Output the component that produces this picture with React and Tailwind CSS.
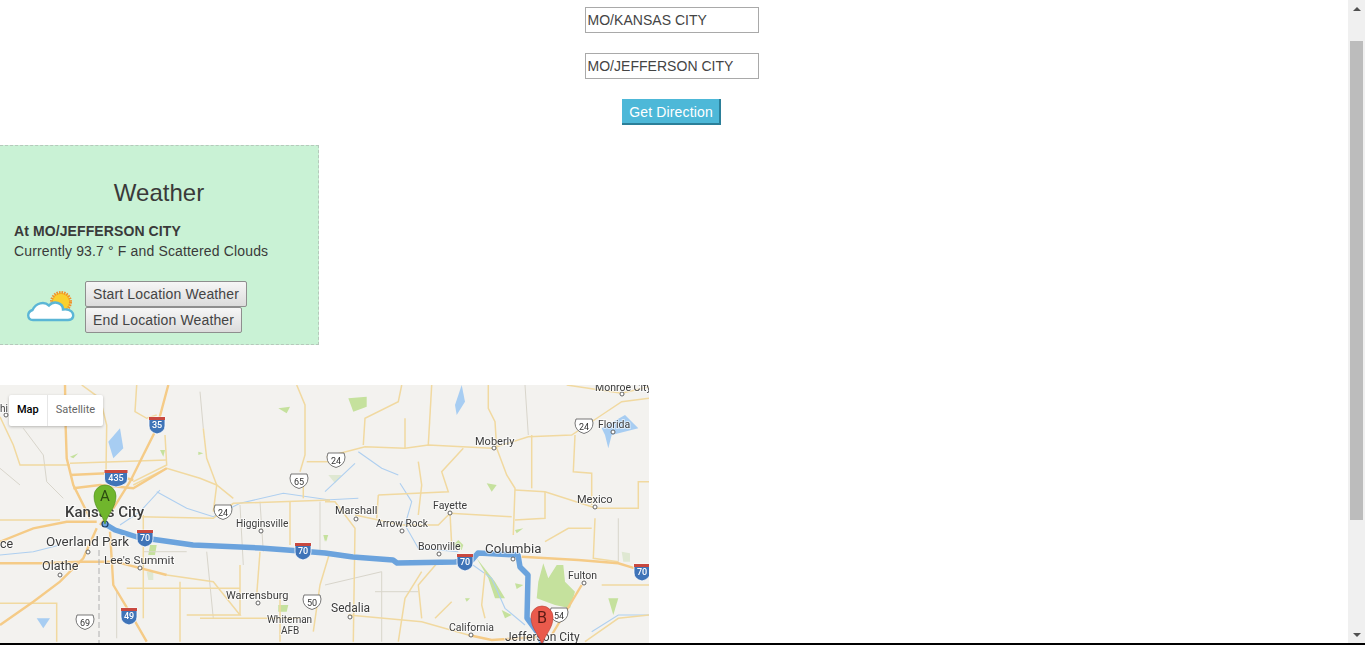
// road data is traced from two map halves; z2 is shifted by the second half's x offset
const scale = (s, dx = 0) =>
  s
    .split(" ")
    .map((p) => {
      const [x, y] = p.split(",").map(Number);
      return `${(x / 3 + dx).toFixed(1)},${(y / 3).toFixed(1)}`;
    })
    .join(" ");
const z1 = (list) => list.map((s) => scale(s));
const z2 = (list) => list.map((s) => scale(s, 325));

const majorRoads = [
  ...z1([
    "505,0 470,130 430,210 390,290 340,370 300,420",
    "195,0 197,130 200,220 220,300 270,400",
    "0,470 100,430 200,410 290,410",
    "0,535 130,535 240,530 340,530",
    "0,720 100,650 180,590 250,520 290,430",
    "330,440 340,600 400,700 440,770",
    "220,310 300,300 400,310 500,250",
    "210,270 320,265 400,285",
    "345,530 500,570",
  ]),
  ...z2([
    "590,515 760,525 880,535 930,550 972,550",
    "430,750 500,765 650,755",
    "770,600 680,750",
  ]),
];

const minorRoads = [
  ...z1([
    "245,0 300,40 320,120 318,260",
    "410,0 405,80 440,100 470,90",
    "495,150 500,240 400,290",
    "610,130 620,220 650,300 640,380",
    "890,0 915,60 915,210 900,260",
    "0,95 40,180 60,240 210,240",
    "210,235 500,225",
    "400,300 500,250 600,280 650,300 700,340",
    "420,395 640,400 700,355 990,345",
    "430,390 430,700",
    "0,405 180,405",
    "500,570 640,590 720,690 560,690",
    "720,690 720,540",
    "780,500 770,630",
    "870,350 870,480",
    "910,300 910,340",
    "990,230 920,230",
    "990,500 960,600 940,740",
    "540,590 540,770",
    "0,655 170,655 170,770",
    "380,610 720,610",
    "600,700 900,700",
    "840,640 840,770",
  ]),
  ...z2([
    "0,350 30,350 90,430 85,770",
    "5,215 120,185 240,190 310,180 500,190 610,155 740,150 830,90 890,50 972,40",
    "725,0 890,25 972,5",
    "115,180 120,100 220,50 230,0",
    "240,190 240,100",
    "310,180 320,0",
    "490,0 490,70 510,110 515,190 545,270 570,310 565,450",
    "415,190 350,260 370,320 160,330",
    "280,230 290,300 280,390",
    "160,330 155,400",
    "90,390 230,420 340,420 375,385 560,395",
    "375,385 380,480",
    "570,315 660,320 800,365 810,370 940,370 940,290 972,290",
    "810,400 805,520 880,530",
    "620,150 620,310",
    "750,150 745,260 800,265 800,360",
    "570,405 660,400 660,320",
    "660,470 730,430 800,430",
    "340,530 280,600 290,700",
    "290,560 240,640 220,770",
    "70,690 290,710 430,750",
    "480,560 470,660 480,700",
    "380,650 330,700",
    "780,770 880,700 972,690",
    "830,600 972,600",
  ]),
];

const thinRoads = [
  ...z1([
    "70,130 130,210 140,290 190,340",
    "600,20 610,130",
    "720,360 730,540",
    "780,350 790,500",
    "620,500 640,700",
    "960,350 960,500",
    "350,620 350,760",
    "430,500 560,500",
    "0,250 60,300",
  ]),
  ...z2([
    "170,560 170,770",
    "600,0 610,150",
    "0,600 170,560",
    "880,400 880,530",
    "150,620 280,620",
  ]),
];

const rivers = [
  ...z1([
    "480,315 420,380 360,420",
    "470,320 560,370 640,395 720,355 850,325 990,345",
    "0,510 100,500 180,480",
  ]),
  ...z2([
    "0,345 100,340",
    "100,200 170,250 220,270",
    "0,320 90,235",
    "225,295 260,350 240,420 280,490 400,500",
    "430,530 500,580 540,670 600,720",
    "972,690 880,690 800,740",
  ]),
];

const greens = [
  ...z2([
    "70,40 125,35 125,65 85,80",
    "485,295 515,300 500,320",
    "640,590 655,535 670,580 695,540 715,540 720,590 750,620 735,670 690,660 635,640",
    "570,435 595,430 575,445",
    "570,595 595,600 575,612",
    "850,640 880,640 865,690",
    "400,465 415,480 410,495 385,480",
    "455,520 510,590 540,640 510,640 490,580",
    "530,675 560,690 540,700",
    "420,640 435,640 425,650",
    "0,450 8,450 5,470",
  ]),
  ...z1([
    "835,70 870,65 860,85",
    "210,215 235,205 220,220",
    "480,195 495,195 490,215",
    "595,200 610,205 595,210",
    "835,660 865,660 860,680 835,680",
    "970,450 985,450 975,470",
    "450,480 470,480 465,510 445,510",
  ]),
];

const paleGreens = [
  ...z2(["10,270 50,270 30,295", "890,500 915,505 915,530 895,530"]),
  ...z1(["440,560 460,560 460,585 445,585"]),
];

const lakes = [
  ...z1(["325,170 360,130 370,190 340,220", "110,700 150,700 130,730"]),
  ...z2(["410,0 420,50 395,90 390,60", "830,130 900,90 940,130 860,150 850,190 840,150"]),
];

const interstates = [
  { n: "35", x: 157, y: 40, w: 16 },
  { n: "435", x: 116, y: 93, w: 23 },
  { n: "70", x: 145, y: 153, w: 16 },
  { n: "70", x: 303, y: 166, w: 16 },
  { n: "70", x: 465, y: 177, w: 16 },
  { n: "70", x: 642, y: 187, w: 16 },
  { n: "49", x: 129, y: 231, w: 16 },
];

const highways = [
  { n: "65", x: 299, y: 96 },
  { n: "24", x: 223, y: 127 },
  { n: "24", x: 336, y: 75 },
  { n: "24", x: 584, y: 41 },
  { n: "69", x: 85, y: 237 },
  { n: "50", x: 312, y: 217 },
  { n: "54", x: 559, y: 230 },
];

// label, x, baseline y, size, weight
const places = [
  ["Monroe City", 595, 6, 10.5],
  ["Florida", 598, 43, 10.5],
  ["Moberly", 475, 60, 11],
  ["Mexico", 577, 118, 11],
  ["Fayette", 433, 124, 10.5],
  ["Marshall", 335, 129, 11],
  ["Arrow Rock", 376, 142, 10.2],
  ["Higginsville", 236, 142, 10.2],
  ["Boonville", 418, 165, 10.5],
  ["Columbia", 485, 168, 13.3],
  ["Kansas City", 65, 132, 15, 500],
  ["ce", 0, 163, 12.5],
  ["Overland Park", 46, 161, 13.4],
  ["Lee's Summit", 104, 179, 11.8],
  ["Olathe", 42, 185, 12.6],
  ["Fulton", 568, 194, 10.5],
  ["Warrensburg", 226, 214, 11],
  ["Sedalia", 331, 227, 12],
  ["California", 449, 246, 10.5],
  ["Whiteman", 267, 238, 10],
  ["AFB", 281, 249, 10],
  ["Jefferson City", 505, 256, 12],
  ["hi", 0, 27, 10],
];

const dots = [
  [622, 9], [613, 47], [494, 63], [595, 122], [450, 128], [356, 134], [402, 146], [261, 146],
  [439, 169], [513, 174], [88, 167], [140, 183], [60, 190], [584, 198], [258, 218], [350, 232],
  [471, 250], [6, 30],
];

function MapArt() {
  return (
    <svg
      width="649"
      height="258"
      viewBox="0 0 649 258"
      className="block blur-[0.3px]"
      style={{ fontFamily: "Roboto, sans-serif" }}
    >
      <rect width="649" height="258" fill="#f3f2ef" />
      {paleGreens.map((p, i) => (
        <polygon key={i} points={p} fill="#dfe8d2" />
      ))}
      {greens.map((p, i) => (
        <polygon key={i} points={p} fill="#c5e19d" />
      ))}
      {lakes.map((p, i) => (
        <polygon key={i} points={p} fill="#a7cdf2" />
      ))}
      {thinRoads.map((p, i) => (
        <polyline key={i} points={p} fill="none" stroke="#d8d5cb" strokeWidth="1" />
      ))}
      {rivers.map((p, i) => (
        <polyline key={i} points={p} fill="none" stroke="#aecff0" strokeWidth="1.1" />
      ))}
      {minorRoads.map((p, i) => (
        <polyline key={i} points={p} fill="none" stroke="#f1d9a0" strokeWidth="1.5" />
      ))}
      {majorRoads.map((p, i) => (
        <polyline key={i} points={p} fill="none" stroke="#f5cb87" strokeWidth="2.4" />
      ))}
      <path d="M99 165 V258" stroke="#b0b0b0" strokeWidth="1" strokeDasharray="6 3" />
      <polyline
        points="105,139 115,145 137,152 193,160 260,163 287,165 325,168 353,172 393,175 397,178 455,177 472,175 478,168 518,170 520,182 528,190 527,233 538,248 542,258"
        fill="none"
        stroke="#6ba3dd"
        strokeWidth="5.5"
        strokeLinejoin="round"
      />
      {interstates.map((s, i) => (
        <g key={i} transform={`translate(${s.x} ${s.y})`}>
          <path
            d={`M${-s.w / 2} -8 H${s.w / 2} V1 Q${s.w / 2} 7 0 9 Q${-s.w / 2} 7 ${-s.w / 2} 1 Z`}
            fill="#3f74b8"
            stroke="#fff"
            strokeWidth="0.8"
          />
          <rect x={-s.w / 2} y="-8" width={s.w} height="3" fill="#c8483f" />
          <text y="3" textAnchor="middle" fontSize="9" fontWeight="500" fill="#fff">
            {s.n}
          </text>
        </g>
      ))}
      {highways.map((s, i) => (
        <g key={i} transform={`translate(${s.x} ${s.y})`}>
          <path d="M-8 -7 H8 L9 -3 Q9 5 0 7.5 Q-9 5 -9 -3 Z" fill="#fff" stroke="#555" strokeWidth="0.8" />
          <text y="3.5" textAnchor="middle" fontSize="9" fill="#333">
            {s.n}
          </text>
        </g>
      ))}
      {dots.map(([x, y], i) => (
        <circle key={i} cx={x} cy={y} r="2" fill="#fff" stroke="#555" strokeWidth="0.9" />
      ))}
      {places.map(([t, x, y, size, weight], i) => (
        <text
          key={i}
          x={x}
          y={y}
          fontSize={size}
          fontWeight={weight || 400}
          fill="#3c3c3c"
          stroke="#fff"
          strokeWidth="2"
          paintOrder="stroke"
          strokeOpacity="0.6"
        >
          {t}
        </text>
      ))}
      <circle cx="105" cy="139" r="3" fill="#6ba3dd" stroke="#1e3f66" strokeWidth="1.2" />
      <path d="M105 139 C102 128 94 123 94 111 A11 11 0 0 1 116 111 C116 123 108 128 105 139 Z" fill="#70b62c" stroke="#4c8a1c" strokeWidth="0.6" />
      <text x="105" y="116" textAnchor="middle" fontSize="15" fill="#2c4a12">
        A
      </text>
      <path d="M542 260 C539 249 531 244 531 232 A11 11 0 0 1 553 232 C553 244 545 249 542 260 Z" fill="#ea5a4c" stroke="#b83c30" strokeWidth="0.6" />
      <text x="542" y="238" textAnchor="middle" fontSize="16" fill="#5a1a14">
        B
      </text>
    </svg>
  );
}

function CloudIcon() {
  return (
    <svg width="48" height="32" viewBox="0 0 48 32">
      <circle cx="34" cy="11" r="9.5" fill="#f9d02f" stroke="#f0902a" strokeWidth="3" strokeDasharray="1.5 1" />
      <path
        d="M6 29 C0 29 -0.5 21 5.5 19 C9 12 17 10 22 14.5 C27 9 36 12 36 18.5 C44 17.5 47 22 46 26 C45 29 43 29 41 29 Z"
        fill="#fff"
        stroke="#5bb6d6"
        strokeWidth="2.4"
      />
    </svg>
  );
}

function WeatherButton({ children }) {
  return (
    <button className="block h-[26px] px-[7px] border border-[#8e8e8e] rounded-[2px] bg-gradient-to-b from-[#f6f6f6] to-[#dcdcdc] text-[14px] leading-none tracking-[0.14px] text-[#444]">
      {children}
    </button>
  );
}

function TextBox({ value, className }) {
  return (
    <input
      readOnly
      value={value}
      className={`block w-[174px] h-[26px] px-[2px] border border-[#a9a9a9] bg-white text-[14px] tracking-[0.03px] text-[#444] outline-none ${className}`}
    />
  );
}

export default function App() {
  return (
    <div className="h-[645px] w-[1365px] overflow-hidden flex flex-col bg-white font-['Liberation_Sans',Arial,sans-serif] text-[#3a3a3a]">
      <div className="flex flex-1 min-h-0">
        <main className="flex-1 min-w-0">
          <div className="flex flex-col items-center w-[1343px] pt-[7px]">
            <TextBox value="MO/KANSAS CITY" />
            <TextBox value="MO/JEFFERSON CITY" className="mt-5" />
            <button className="mt-5 h-[26px] w-[99px] pt-[2px] pl-[1px] bg-[#4db8d8] border-b-2 border-r-2 border-[#2b7f99] text-white text-[14px] tracking-[0.15px]">
              Get Direction
            </button>
          </div>

          <section className="mt-5 w-[319px] h-[200px] bg-[#c9f2d5] border border-l-0 border-dashed border-[#b5c9bb] pl-[14px] pt-[31px]">
            <h2 className="text-[24px] leading-[32px] text-center pr-[14px]">Weather</h2>
            <p className="mt-[12px] text-[14px] leading-[20px] font-bold tracking-[0.1px]">At MO/JEFFERSON CITY</p>
            <p className="text-[14px] leading-[20px] tracking-[0.15px]">Currently 93.7 ° F and Scattered Clouds</p>
            <div className="flex items-center mt-[20px]">
              <div className="ml-[13px] mr-[10px] -mt-[1px]">
                <CloudIcon />
              </div>
              <div>
                <WeatherButton>Start Location Weather</WeatherButton>
                <WeatherButton>End Location Weather</WeatherButton>
              </div>
            </div>
          </section>

          <div className="relative mt-10 w-[649px] h-[258px] overflow-hidden">
            <MapArt />
            <div className="absolute left-[9px] top-[10px] flex h-[31px] bg-white rounded-[2px] shadow-[0_1px_3px_rgba(0,0,0,0.25)] font-['Roboto',sans-serif] text-[11px]">
              <span className="flex items-center px-[8px] font-medium text-black border-r border-[#e6e6e6]">Map</span>
              <span className="flex items-center px-[8px] text-[#666]">Satellite</span>
            </div>
          </div>
        </main>

        <aside className="w-[17px] shrink-0 bg-[#f0f0f0] flex flex-col items-center">
          <div className="h-[17px] flex items-center justify-center shrink-0">
            <div className="w-0 h-0 border-l-[4px] border-r-[4px] border-b-[4px] border-l-transparent border-r-transparent border-b-[#505050]" />
          </div>
          <div className="mt-[24px] w-[13px] h-[479px] bg-[#bcbcbc] shrink-0" />
          <div className="mt-auto h-[17px] flex items-center justify-center shrink-0">
            <div className="w-0 h-0 border-l-[4px] border-r-[4px] border-t-[4px] border-l-transparent border-r-transparent border-t-[#505050]" />
          </div>
        </aside>
      </div>
      <div className="h-[2px] bg-black shrink-0" />
    </div>
  );
}
